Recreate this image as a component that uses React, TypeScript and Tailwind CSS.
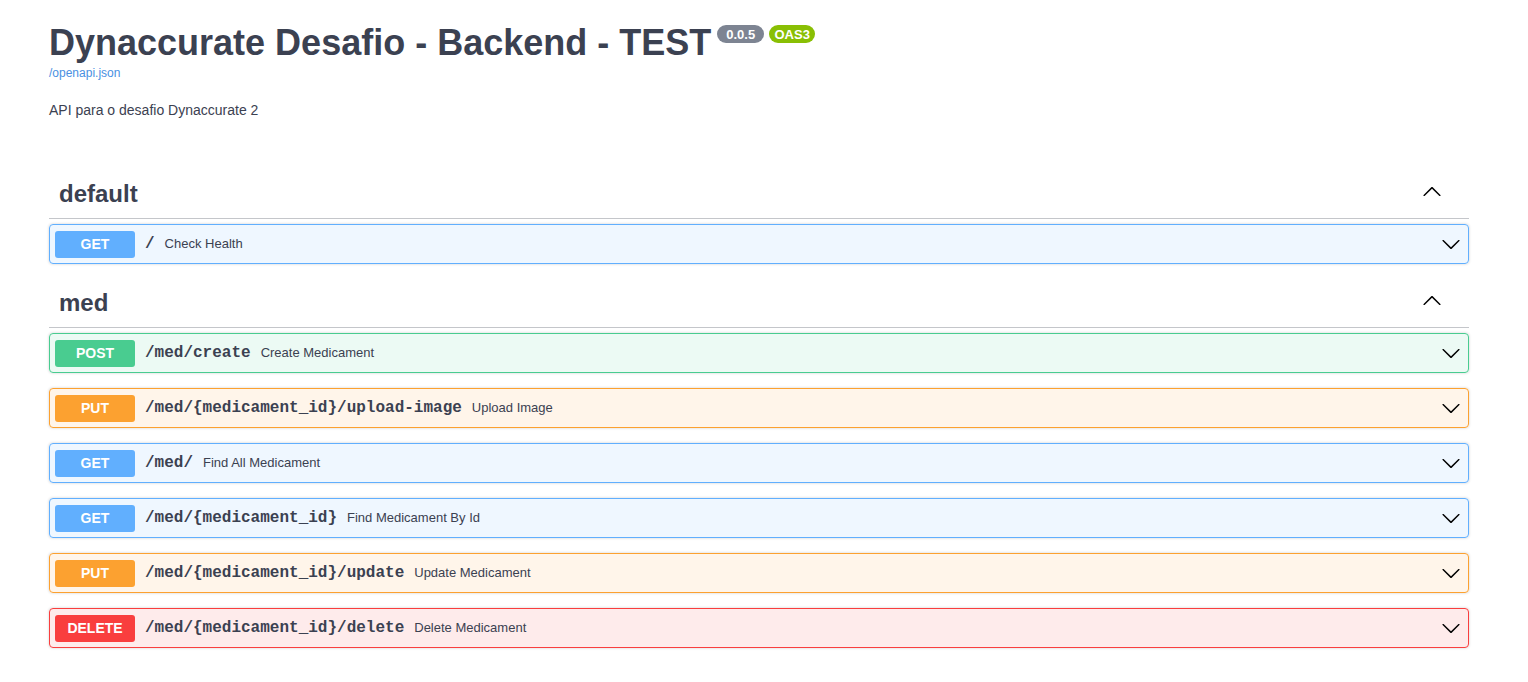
import React from "react";

type Op = {
  method: "GET" | "POST" | "PUT" | "DELETE";
  path: string;
  summary: string;
};

type Tag = {
  name: string;
  ops: Op[];
};

const tags: Tag[] = [
  {
    name: "default",
    ops: [{ method: "GET", path: "/", summary: "Check Health" }],
  },
  {
    name: "med",
    ops: [
      { method: "POST", path: "/med/create", summary: "Create Medicament" },
      { method: "PUT", path: "/med/{medicament_id}/upload-image", summary: "Upload Image" },
      { method: "GET", path: "/med/", summary: "Find All Medicament" },
      { method: "GET", path: "/med/{medicament_id}", summary: "Find Medicament By Id" },
      { method: "PUT", path: "/med/{medicament_id}/update", summary: "Update Medicament" },
      { method: "DELETE", path: "/med/{medicament_id}/delete", summary: "Delete Medicament" },
    ],
  },
];

const methodStyles: Record<Op["method"], { block: string; badge: string }> = {
  GET: {
    block: "border-[#61affe] bg-[rgba(97,175,254,0.1)]",
    badge: "bg-[#61affe]",
  },
  POST: {
    block: "border-[#49cc90] bg-[rgba(73,204,144,0.1)]",
    badge: "bg-[#49cc90]",
  },
  PUT: {
    block: "border-[#fca130] bg-[rgba(252,161,48,0.1)]",
    badge: "bg-[#fca130]",
  },
  DELETE: {
    block: "border-[#f93e3e] bg-[rgba(249,62,62,0.1)]",
    badge: "bg-[#f93e3e]",
  },
};

const Arrow = ({ up = false }: { up?: boolean }) => (
  <svg
    width="20"
    height="20"
    viewBox="0 0 20 20"
    className={up ? "rotate-180" : ""}
    fill="#000"
  >
    <path d="M17.418 6.109c.272-.268.709-.268.979 0s.271.701 0 .969l-7.908 7.83c-.27.268-.707.268-.979 0l-7.908-7.83c-.27-.268-.27-.701 0-.969.271-.268.709-.268.979 0L10 13.25l7.418-7.141z" />
  </svg>
);

const OpBlock = ({ op }: { op: Op }) => {
  const s = methodStyles[op.method];
  return (
    <div
      className={`flex items-center h-[40px] border rounded-[4px] mb-[15px] px-[5px] shadow-[0_0_3px_rgba(0,0,0,0.19)] ${s.block}`}
    >
      <span
        className={`w-[80px] h-[27px] flex items-center justify-center rounded-[3px] text-white text-[14px] font-bold ${s.badge}`}
      >
        {op.method}
      </span>
      <span className="px-[10px] text-[16px] font-bold text-[#3b4151] font-['Liberation_Mono',monospace]">
        {op.path}
      </span>
      <span className="text-[13px] text-[#3b4151]">{op.summary}</span>
      <span className="ml-auto mr-[2px] flex items-center">
        <Arrow />
      </span>
    </div>
  );
};

export default function App() {
  return (
    <div className="bg-white min-h-[682px] font-['Liberation_Sans',Arial,sans-serif] text-[#3b4151]">
      <div className="ml-[49px] w-[1420px]">
        <div className="pt-[21px]">
          <h2 className="flex items-start text-[36px] font-bold leading-[44px] text-[#3b4151]">
            <span>Dynaccurate Desafio - Backend - TEST</span>
            <span className="ml-[6px] mt-[4px] h-[18px] w-[47px] flex items-center justify-center rounded-full bg-[#7d8492] text-white text-[13px] font-bold leading-none">
              0.0.5
            </span>
            <span className="ml-[5px] mt-[4px] h-[18px] w-[46px] flex items-center justify-center rounded-full bg-[#89bf04] text-white text-[13px] font-bold leading-none">
              OAS3
            </span>
          </h2>
          <a className="block text-[12px] leading-[16px] text-[#4990e2] w-fit">/openapi.json</a>
          <p className="mt-[19px] text-[14px] leading-[20px]">API para o desafio Dynaccurate 2</p>
        </div>

        <div className="mt-[50px]">
          {tags.map((tag, t) => (
            <section key={tag.name} className={t > 0 ? "mt-[2px]" : ""}>
              <div className="flex items-center justify-between h-[49px] pl-[10px] pr-[20px] border-b border-[rgba(59,65,81,0.3)]">
                <span className="text-[24px] font-bold leading-[28px]">{tag.name}</span>
                <span className="flex items-center mr-[7px] -mt-[4px]">
                  <Arrow up />
                </span>
              </div>
              <div className="mt-[5px]">
                {tag.ops.map((op, i) => (
                  <OpBlock key={i} op={op} />
                ))}
              </div>
            </section>
          ))}
        </div>
      </div>
    </div>
  );
}
